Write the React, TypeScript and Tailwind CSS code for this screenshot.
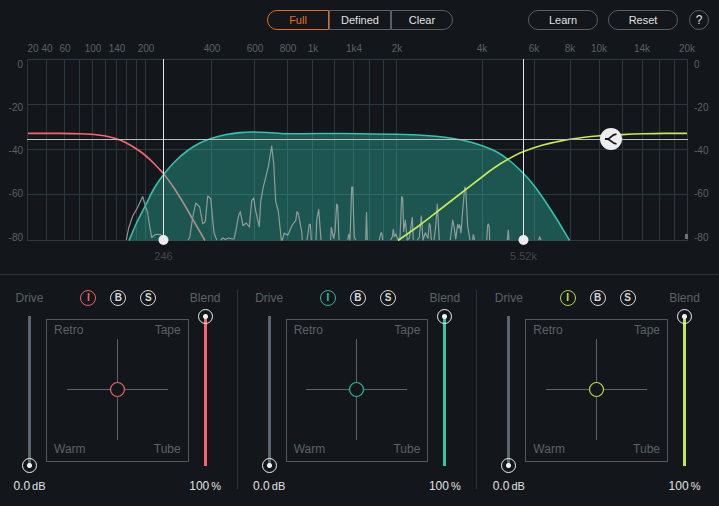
import React, { useId, useState } from 'react';
import clsx from 'clsx';

const MODES = ['Full', 'Defined', 'Clear'];

const GRID_X = [
  27.5, 46.5, 64.5, 79.5, 92.5, 105.5, 116.5, 126.5, 136.5, 145.5, 211.5, 254.5, 287.5, 312.5, 334.5,
  353.5, 369.5, 383.5, 396.5, 482.5, 534.5, 570.5, 599.5, 622.5, 642.5, 659.5, 674.5, 687.5,
];
const GRID_Y = [59.5, 104.5, 149.5, 194.5, 240.5];

const FREQ_LABELS = [
  { x: 33, label: '20' },
  { x: 47, label: '40' },
  { x: 65, label: '60' },
  { x: 93, label: '100' },
  { x: 117, label: '140' },
  { x: 146, label: '200' },
  { x: 212, label: '400' },
  { x: 255, label: '600' },
  { x: 288, label: '800' },
  { x: 313, label: '1k' },
  { x: 354, label: '1k4' },
  { x: 397, label: '2k' },
  { x: 482, label: '4k' },
  { x: 534, label: '6k' },
  { x: 570, label: '8k' },
  { x: 599, label: '10k' },
  { x: 642, label: '14k' },
  { x: 687, label: '20k' },
];

const DB_LABELS = [
  { y: 68, label: '0' },
  { y: 111, label: '-20' },
  { y: 154, label: '-40' },
  { y: 197, label: '-60' },
  { y: 241, label: '-80' },
];

type Point = [number, number];

const LOW_CURVE: Point[] = [
  [28, 133.4], [60, 133.4], [80, 133.8], [98, 135], [110, 137], [120, 140], [131, 145.5], [143, 153.5],
  [153, 162.5], [163.5, 173.5],
];
const LOW_TAIL: Point[] = [[163.5, 173.5], [173, 186.5], [184, 204], [194, 221.5], [205, 240.5]];
const MID_CURVE: Point[] = [
  [129, 240.5], [137, 222], [145.7, 205], [154, 188.5], [164, 174], [175, 161.5], [187, 151], [199, 143.5],
  [211, 138.6], [225, 134.8], [240, 132.6], [254, 132], [272, 132.8], [290, 133.8], [320, 133.5],
  [360, 133.7], [397, 134.3], [425, 135.5], [445, 137.3], [463, 140.3], [480, 145], [496, 151.5],
  [510, 161], [523.5, 173.5], [534, 185.5], [545, 201], [557, 219.5], [569.5, 240.5],
];
const HIGH_CURVE: Point[] = [
  [398, 240.5], [420, 225], [440, 209.5], [460, 194], [480, 178.5], [494, 168], [508, 159.3], [523, 151.8],
  [543, 145], [556, 142], [570, 139.3], [597, 136], [622, 134.6], [643, 133.8], [665, 133.4], [687, 133.4],
];

const SPECTRUM = [
  'M126.3 240L128.7 228L132.7 216L137.3 208L142.7 196.5L145 205L147.3 211.5L150 228L151.7 237.5L155.3 234.5L160 234.5L163.5 236L167.3 240',
  'M188 240L189.7 237.5L192.7 217.5L195.7 203L199.7 207L202.7 223.7L205.3 221.7L207.7 196L210.7 198.7L214 232.7L216.7 240',
  'M220.7 240L223 238L225.3 239.5L228.7 238L232 239L234 239L236 230L238.7 215L240.3 211.7L243 225.7L246.3 223L249.3 227L251.7 200.7L253.7 198L255.7 211L259.3 226.7L260.7 201.7L263 188.3L268.3 166.7L271.7 146L273.7 163.3L275.7 201.7L278.3 211L281.3 240L282.3 240L284.3 233L287.7 235.3L292.3 225L295.7 220.7L297 211.7L298.3 213.7L301.7 231.7L302.3 240',
  'M307 240L309.3 224.3L310.3 224.3L311.3 240',
  'M316 240L316.7 220L318.7 209.3L321 240',
  'M330.7 240L331.3 227.3L333.7 238.3L335 231.7L336.7 204L337.7 206L339 240',
  'M347.7 240L348.7 234.3L350 240L351.7 187L352.7 187L354.3 236.7L355.7 240',
  'M365.7 240L366.5 212.7L367.3 240',
  'M379.3 240L380.7 233.3L381.7 232.7L382.7 240',
  'M390.7 240L392.3 236.7L393.3 229.3L394.3 236.7L395.7 234L398.3 240L400 237.3L401.7 196.7L402.7 198L403.7 231.7L405.3 220L407.3 240L409.3 238.3L411 226.7L412.3 217.3L413.3 240',
  'M417.3 240L419.3 237.3L421.3 216L423 240L425.3 232.7L428 238.3L429.3 223.3L430.3 226L431.3 240',
  'M434 240L435.7 226.7L437.3 204L439.3 240',
  'M450.3 240L452.7 220L454 226.7L455.7 239L457.7 224.3L458.7 228L459.7 224.7L461 233L462.7 210L464.7 187.3L465.7 188L467.7 226.7L470 240',
  'M472.7 240L473.3 234.7L474.7 240',
  'M486.7 240L487.7 225L488.3 224L489.2 226.5L489.7 240',
  'M507.3 240L508.3 230L509 240',
  'M538.7 240L539.7 236.7L541 240',
];

// Catmull-Rom spline through the points, as cubic beziers
const smooth = (pts: Point[]) => {
  let d = `M${pts[0][0]} ${pts[0][1]}`;
  for (let i = 0; i < pts.length - 1; i++) {
    const p0 = pts[i - 1] ?? pts[i];
    const p1 = pts[i];
    const p2 = pts[i + 1];
    const p3 = pts[i + 2] ?? p2;
    d += `C${p1[0] + (p2[0] - p0[0]) / 6} ${p1[1] + (p2[1] - p0[1]) / 6} ${p2[0] - (p3[0] - p1[0]) / 6} ${
      p2[1] - (p3[1] - p1[1]) / 6
    } ${p2[0]} ${p2[1]}`;
  }
  return d;
};

const Header: React.FC = () => {
  const [mode, setMode] = useState('Full');

  return (
    <header className="grid grid-cols-[1fr_auto_1fr] items-center pt-[10px] pl-[11px] pr-[10px] text-[11px] leading-4 text-[#e0e2e3]">
      <div className="col-start-2 flex">
        {MODES.map((m) => (
          <button
            key={m}
            type="button"
            aria-pressed={mode === m}
            onClick={() => setMode(m)}
            className={clsx(
              'flex h-5 w-[62px] items-center justify-center border first:rounded-l-full last:rounded-r-full',
              mode === m ? 'border-[#e56a1c] text-[#ec6d1c]' : 'border-[#566066]'
            )}
          >
            {m}
          </button>
        ))}
      </div>
      <div className="flex justify-end gap-[11px]">
        <div className="flex gap-[10px]">
          <button type="button" className="h-5 w-[70px] rounded-full border border-[#566066]">
            Learn
          </button>
          <button type="button" className="h-5 w-[70px] rounded-full border border-[#566066]">
            Reset
          </button>
        </div>
        <button type="button" aria-label="Help" className="h-5 w-5 rounded-full border border-[#566066] text-xs leading-4">
          ?
        </button>
      </div>
    </header>
  );
};

const Spectrum: React.FC = () => {
  const mid = smooth(MID_CURVE);

  return (
    <section className="relative mt-[10px]" aria-label="Crossover">
      <svg viewBox="0 40 719 230" className="block w-full">
        <g stroke="#2d373e">
          {GRID_X.map((x) => (
            <line key={x} x1={x} x2={x} y1="59" y2="241" />
          ))}
          {GRID_Y.map((y) => (
            <line key={y} x1="27" x2="688" y1={y} y2={y} />
          ))}
        </g>
        <g className="fill-[#5a6267] text-[10px]">
          {FREQ_LABELS.map(({ x, label }) => (
            <text key={label} x={x} y="52" textAnchor="middle">
              {label}
            </text>
          ))}
          {DB_LABELS.map(({ y, label }) => (
            <text key={label} x="23" y={y} textAnchor="end">
              {label}
            </text>
          ))}
          {DB_LABELS.map(({ y, label }) => (
            <text key={label} x="694" y={y}>
              {label}
            </text>
          ))}
        </g>

        <path d={mid} fill="#2fbfa9" fillOpacity="0.38" />
        <g fill="none" stroke="#a3a8a8" strokeOpacity="0.85" strokeWidth="1.2">
          {SPECTRUM.map((d) => (
            <path key={d} d={d} strokeLinejoin="round" />
          ))}
        </g>
        <rect x="685" y="234" width="3" height="5" fill="#6f7375" />
        <g fill="none" strokeWidth="1.6">
          <path d={smooth(LOW_CURVE)} stroke="#fb6570" />
          <path d={smooth(LOW_TAIL)} stroke="#a98f8b" />
          <path d={mid} stroke="#33c2ac" />
          <path d={smooth(HIGH_CURVE)} stroke="#c5ea58" />
        </g>

        <line x1="27" x2="688" y1="139.5" y2="139.5" stroke="#b9bdbd" />
        <g stroke="#e4e6e6">
          <line x1="163.5" x2="163.5" y1="59" y2="240" />
          <line x1="523.5" x2="523.5" y1="59" y2="240" />
        </g>
        <g fill="#ececec">
          <circle cx="163.5" cy="240" r="5" />
          <circle cx="523.5" cy="240" r="5" />
        </g>
        <g className="fill-[#3f484e] text-[11px]" textAnchor="middle">
          <text x="163.5" y="260">246</text>
          <text x="523.5" y="260">5.52k</text>
        </g>
      </svg>
      <button
        type="button"
        aria-label="Learn crossover"
        className="absolute top-[43%] left-[85%] flex h-[22px] w-[22px] -translate-x-1/2 -translate-y-1/2 items-center justify-center rounded-full bg-[#ededed]"
      >
        <svg viewBox="0 0 22 22" className="h-[22px] w-[22px]" fill="none" stroke="#14171b" strokeWidth="1.8">
          <path d="M5 11H7.5C10.5 10.5 11.5 6.5 16.5 6.2M7.5 11C10.5 11.5 11.5 15.5 16.5 15.8" />
        </svg>
      </button>
    </section>
  );
};

interface SliderProps {
  label: string;
  unit: string;
  max: number;
  initial: number;
  format: (v: number) => string;
  track: string;
}

const Slider: React.FC<SliderProps> = ({ label, unit, max, initial, format, track }) => {
  const id = useId();
  const [value, setValue] = useState(initial);

  return (
    <div className="flex w-[33px] shrink-0 flex-col items-center text-xs leading-4 whitespace-nowrap">
      <label htmlFor={id} className="text-[#5a6267]">
        {label}
      </label>
      <input
        id={id}
        type="range"
        min={0}
        max={max}
        step={max / 100}
        value={value}
        onChange={(e) => setValue(Number(e.target.value))}
        className={clsx(
          'mt-[3px] h-[164px] w-[15px] cursor-pointer appearance-none bg-[length:3px_150px] bg-center bg-no-repeat [direction:rtl] [writing-mode:vertical-lr]',
          '[&::-webkit-slider-thumb]:h-[15px] [&::-webkit-slider-thumb]:w-[15px] [&::-webkit-slider-thumb]:appearance-none [&::-webkit-slider-thumb]:rounded-full [&::-webkit-slider-thumb]:border [&::-webkit-slider-thumb]:border-[#f0f0f0] [&::-webkit-slider-thumb]:bg-[radial-gradient(circle,#f4f4f4_2px,transparent_3px)]',
          track
        )}
      />
      <output htmlFor={id} className="mt-[5px] flex items-baseline gap-[2px] text-[#e0e2e3]">
        {format(value)}
        <span className="text-[11px]">{unit}</span>
      </output>
    </div>
  );
};

interface BandProps {
  name: string;
  text: string;
  border: string;
  stroke: string;
  track: string;
}

const BANDS: BandProps[] = [
  {
    name: 'Low band',
    text: 'text-[#fb6570]',
    border: 'border-[#ef606b]',
    stroke: 'stroke-[#f0626d]',
    track: 'bg-[linear-gradient(#fb6570,#fb6570)]',
  },
  {
    name: 'Mid band',
    text: 'text-[#31c4ab]',
    border: 'border-[#2db7a0]',
    stroke: 'stroke-[#2db7a0]',
    track: 'bg-[linear-gradient(#31c4ab,#31c4ab)]',
  },
  {
    name: 'High band',
    text: 'text-[#c2e84f]',
    border: 'border-[#b4d64a]',
    stroke: 'stroke-[#b8da4c]',
    track: 'bg-[linear-gradient(#c2e84f,#c2e84f)]',
  },
];

const Band: React.FC<BandProps> = ({ name, text, border, stroke, track }) => (
  <section aria-label={name} className="group flex pr-[2px]">
    <div className="flex flex-1 pl-[13px] pr-[15px]">
      <Slider
        label="Drive"
        unit="dB"
        max={18}
        initial={0}
        format={(v) => v.toFixed(1)}
        track="bg-[linear-gradient(#5a666e,#5a666e)]"
      />
      <div className="flex flex-1 flex-col">
        <div className="flex justify-center gap-[14px] pl-[2px] text-[10px] leading-none font-bold text-[#d6d8d9]">
          <button
            type="button"
            aria-label="Enable"
            className={clsx('flex h-4 w-4 items-center justify-center rounded-full border', text, border)}
          >
            I
          </button>
          <button
            type="button"
            aria-label="Bypass"
            className="flex h-4 w-4 items-center justify-center rounded-full border border-[#d6d8d9]"
          >
            B
          </button>
          <button
            type="button"
            aria-label="Solo"
            className="flex h-4 w-4 items-center justify-center rounded-full border border-[#d6d8d9]"
          >
            S
          </button>
        </div>
        <div className="mt-[13px] flex h-[143px] flex-col justify-between border border-[#50585c] px-[7px] pt-[2px] pb-[4px] text-xs leading-4 text-[#5a6267]">
          <div className="flex justify-between">
            <span>Retro</span>
            <span>Tape</span>
          </div>
          <svg viewBox="0 0 101 101" className="h-[101px] w-[101px] self-center" fill="none">
            <path d="M50.5 0V43M50.5 58V101M0 50.5H43M58 50.5H101" stroke="#5c6468" />
            <circle cx="50.5" cy="50.5" r="7" className={stroke} strokeWidth="1.2" />
          </svg>
          <div className="flex justify-between">
            <span>Warm</span>
            <span>Tube</span>
          </div>
        </div>
      </div>
      <Slider label="Blend" unit="%" max={100} initial={100} format={(v) => v.toFixed(0)} track={track} />
    </div>
    <div className="h-[199px] w-px bg-[#2d3439] group-last:bg-transparent" />
  </section>
);

export default function App() {
  return (
    <main className="min-h-screen bg-[#13161a] font-['Liberation_Sans',Arial,sans-serif]">
      <Header />
      <Spectrum />
      <div className="mt-[4px] grid grid-cols-3 border-t border-[#2d3439] pt-[15px] pb-3">
        {BANDS.map((band) => (
          <Band key={band.name} {...band} />
        ))}
      </div>
    </main>
  );
}
